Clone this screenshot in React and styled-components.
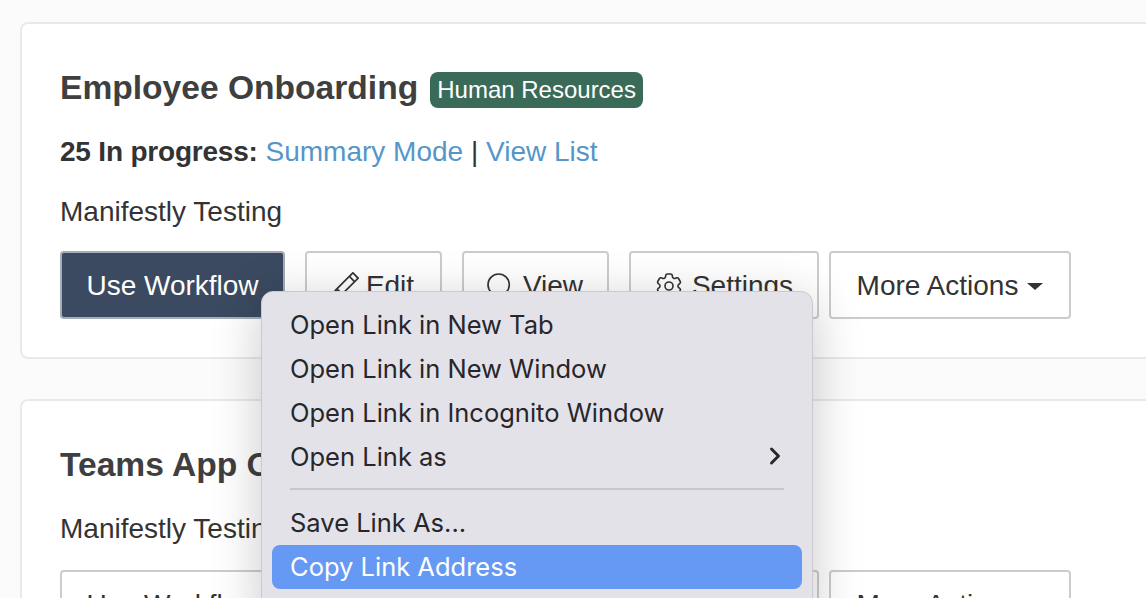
import React from 'react'
import styled, { createGlobalStyle } from 'styled-components'
import { BsPencil } from 'react-icons/bs'
import { HiOutlineCog6Tooth } from 'react-icons/hi2'
import { Search, ChevronRight } from 'lucide-react'

const Global = createGlobalStyle`
  html, body { margin: 0; padding: 0; height: 598px; overflow: hidden; background: #fbfbfb; }
  body { font-family: "Liberation Sans", Arial, sans-serif; color: #333; }
`

const Page = styled.div`
  position: relative;
  height: 598px;
  overflow: hidden;
  padding: 22px 0 0 20px;
  display: flex;
  flex-direction: column;
  gap: 40px;
`

const Card = styled.section`
  width: 1200px;
  flex-shrink: 0;
  background: #fff;
  border: 2px solid #e9e9e9;
  border-radius: 8px;
  padding: 39px 38px 38px;
  display: flex;
  flex-direction: column;
`

const TitleRow = styled.div`
  display: flex;
  align-items: center;
  gap: 12px;
  height: 48px;
`

const Title = styled.h3`
  margin: 0;
  padding-top: 2px;
  font-size: 33.6px;
  font-weight: 700;
  color: #3f3f3f;
  white-space: nowrap;
`

const Badge = styled.span`
  background: #3a6b59;
  color: #fff;
  font-size: 24px;
  line-height: 36px;
  padding: 0 7px;
  border-radius: 8px;
  margin-top: 6px;
`

const Line = styled.p`
  margin: ${p => p.$top}px 0 0;
  font-size: 28px;
  line-height: 40px;
  height: 40px;
  color: #333;
  white-space: nowrap;
`

const Strong = styled.strong`
  letter-spacing: -0.2px;
`

const Link = styled.a`
  color: #5596c8;
`

const Actions = styled.div`
  display: flex;
  gap: 20px;
  margin-top: ${p => p.$top}px;
`

const Group = styled.div`
  display: flex;
  gap: 10px;
`

const Button = styled.div`
  box-sizing: border-box;
  width: ${p => p.$w}px;
  height: 68px;
  padding: 2px ${p => p.$shift || 0}px 0 0;
  display: flex;
  align-items: center;
  justify-content: center;
  gap: 7px;
  font-size: 28px;
  border-radius: 4px;
  border: 2px solid ${p => (p.$primary ? '#a5adb8' : '#cccccc')};
  background: ${p => (p.$primary ? '#3b4a60' : '#fff')};
  color: ${p => (p.$primary ? '#fff' : '#333')};
  white-space: nowrap;
`

const Caret = styled.span`
  width: 0;
  height: 0;
  margin-left: 2px;
  margin-top: 1px;
  border-left: 8px solid transparent;
  border-right: 8px solid transparent;
  border-top: 7px solid #333;
`

const Menu = styled.div`
  position: absolute;
  left: 261px;
  top: 291px;
  width: 552px;
  height: 340px;
  box-sizing: border-box;
  padding: 11px 10px;
  background: #e4e2e9;
  border: 1px solid #cbc9cf;
  border-radius: 12px;
  box-shadow: 0 10px 50px rgba(0, 0, 0, 0.22);
  font-family: Inter, "Noto Sans", sans-serif;
  font-size: 25.5px;
  color: #27262a;
`

const Item = styled.div`
  height: 44px;
  box-sizing: border-box;
  padding: 0 18px 2px;
  display: flex;
  align-items: center;
  justify-content: space-between;
  border-radius: 8px;
  white-space: nowrap;
  background: ${p => (p.$active ? '#6699f3' : 'transparent')};
  color: ${p => (p.$active ? '#fff' : 'inherit')};
`

const Arrow = styled(ChevronRight)`
  margin-right: -5px;
`

const Separator = styled.div`
  height: 2px;
  margin: 9px 18px 11px;
  background: #c9c7cd;
`

function ActionRow({ primary, top }) {
  return (
    <Actions $top={top}>
      <Button $w={225} $primary={primary}>Use Workflow</Button>
      <Button $w={137} $shift={2}><BsPencil size={28} />Edit</Button>
      <Button $w={147} $shift={4}><Search size={32} strokeWidth={1.25} />View</Button>
      <Group>
        <Button $w={190} $shift={2}><HiOutlineCog6Tooth size={32} strokeWidth={1.2} />Settings</Button>
        <Button $w={242}>More Actions<Caret /></Button>
      </Group>
    </Actions>
  )
}

export default function App() {
  return (
    <>
      <Global />
      <Page>
        <Card>
          <TitleRow>
            <Title>Employee Onboarding</Title>
            <Badge>Human Resources</Badge>
          </TitleRow>
          <Line $top={21}>
            <Strong>25 In progress:</Strong> <Link>Summary Mode</Link> | <Link>View List</Link>
          </Line>
          <Line $top={20}>Manifestly Testing</Line>
          <ActionRow primary top={19} />
        </Card>
        <Card>
          <TitleRow>
            <Title>Teams App Onboarding</Title>
          </TitleRow>
          <Line $top={21}>Manifestly Testing</Line>
          <ActionRow top={21} />
        </Card>
        <Menu>
          <Item>Open Link in New Tab</Item>
          <Item>Open Link in New Window</Item>
          <Item>Open Link in Incognito Window</Item>
          <Item>Open Link as<Arrow size={28} strokeWidth={2.5} /></Item>
          <Separator />
          <Item>Save Link As...</Item>
          <Item $active>Copy Link Address</Item>
        </Menu>
      </Page>
    </>
  )
}
